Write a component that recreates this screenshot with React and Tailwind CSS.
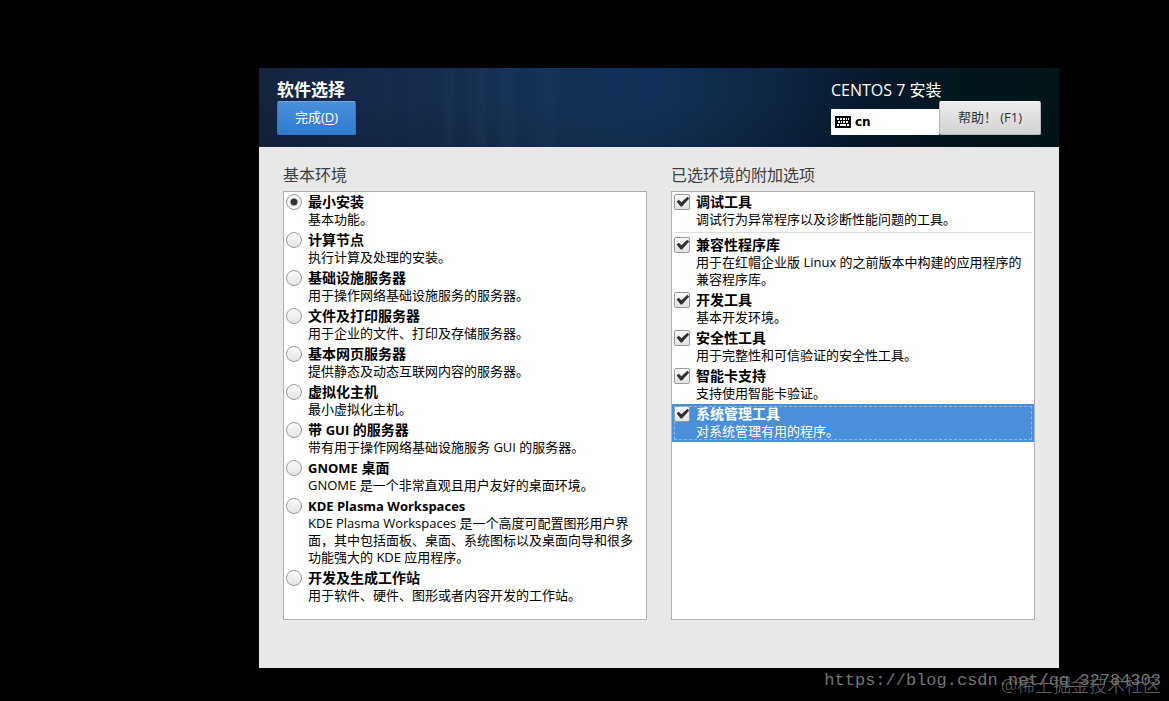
import React, { useState } from "react";

const environments = [
  { name: "最小安装", description: "基本功能。" },
  { name: "计算节点", description: "执行计算及处理的安装。" },
  { name: "基础设施服务器", description: "用于操作网络基础设施服务的服务器。" },
  { name: "文件及打印服务器", description: "用于企业的文件、打印及存储服务器。" },
  { name: "基本网页服务器", description: "提供静态及动态互联网内容的服务器。" },
  { name: "虚拟化主机", description: "最小虚拟化主机。" },
  { name: "带 GUI 的服务器", description: "带有用于操作网络基础设施服务 GUI 的服务器。" },
  { name: "GNOME 桌面", description: "GNOME 是一个非常直观且用户友好的桌面环境。" },
  {
    name: "KDE Plasma Workspaces",
    description:
      "KDE Plasma Workspaces 是一个高度可配置图形用户界面，其中包括面板、桌面、系统图标以及桌面向导和很多功能强大的 KDE 应用程序。",
  },
  { name: "开发及生成工作站", description: "用于软件、硬件、图形或者内容开发的工作站。" },
];

const addons = [
  { name: "调试工具", description: "调试行为异常程序以及诊断性能问题的工具。", separated: true },
  {
    name: "兼容性程序库",
    description: "用于在红帽企业版 Linux 的之前版本中构建的应用程序的兼容程序库。",
  },
  { name: "开发工具", description: "基本开发环境。" },
  { name: "安全性工具", description: "用于完整性和可信验证的安全性工具。" },
  { name: "智能卡支持", description: "支持使用智能卡验证。" },
  { name: "系统管理工具", description: "对系统管理有用的程序。" },
];

function KeyboardIcon() {
  return (
    <svg width="16" height="12" viewBox="0 0 16 12" aria-hidden="true" shapeRendering="crispEdges">
      <rect width="16" height="12" rx="1" fill="#000" />
      <g fill="#fff">
        <path d="M2 2h2v2H2zM5 2h2v2H5zM8 2h2v2H8zM11 2h1v2h-1zM13 2h1v2h-1z" />
        <path d="M3 5h2v2H3zM6 5h1v2H6zM8 5h2v2H8zM11 5h2v2h-2z" />
        <path d="M2 8h2v2H2zM5 8h6v2H5zM12 8h2v2h-2z" />
      </g>
    </svg>
  );
}

// Latin words are set one size smaller than the Chinese characters around them.
function Title({ text }) {
  return text.split(/([A-Za-z][A-Za-z ]*[A-Za-z])/).map((part, i) =>
    i % 2 === 1 ? (
      <span key={i} className="text-[13px] leading-none">
        {part}
      </span>
    ) : (
      part
    ),
  );
}

function ItemText({ name, description }) {
  return (
    <span className="min-w-0 flex-1">
      <span className="block pb-[2px] text-[14px] leading-[15px] font-bold">
        <Title text={name} />
      </span>
      <span className="block text-[13px] leading-[17px]">{description}</span>
    </span>
  );
}

function EnvironmentRow({ item, checked, onChange }) {
  return (
    <li>
      <label className="flex gap-[6px] py-[2px] pr-3 pl-[2px]">
        <input
          type="radio"
          name="environment"
          checked={checked}
          onChange={onChange}
          className="size-4 shrink-0 appearance-none rounded-full border border-[#9a9a9a] bg-[linear-gradient(#fafafa,#e4e4e4)] checked:bg-[radial-gradient(circle,#2e3436_0_3px,#f4f4f4_4px)]"
        />
        <ItemText name={item.name} description={item.description} />
      </label>
    </li>
  );
}

function AddonRow({ item, checked, onChange, selected }) {
  return (
    <li className={selected ? "bg-[#4a90d9] text-white" : ""}>
      <label
        className={
          selected
            ? "flex gap-[6px] py-[2px] pr-[10px] pl-[2px] outline-1 -outline-offset-3 outline-dashed outline-[#8ab9ea]"
            : "flex gap-[6px] py-[2px] pr-[10px] pl-[2px]"
        }
      >
        <span className="grid size-4 shrink-0">
          <input
            type="checkbox"
            checked={checked}
            onChange={onChange}
            className="peer col-start-1 row-start-1 size-4 appearance-none rounded-[2px] border border-[#9a9a9a] bg-[linear-gradient(#fcfcfc,#e2e2e2)]"
          />
          <svg
            viewBox="0 0 16 16"
            aria-hidden="true"
            className="pointer-events-none invisible z-10 col-start-1 row-start-1 size-4 peer-checked:visible"
          >
            <path d="M2.6 7.4 L4.8 5.8 L7.4 8.2 L13.4 2.8 L15.2 4.6 L8 12.4 L6.6 12.4 Z" fill="#2e3436" />
          </svg>
        </span>
        <ItemText name={item.name} description={item.description} />
      </label>
      {item.separated && <hr className="m-[2px] border-t border-[#dcdcdc]" />}
    </li>
  );
}

export default function App() {
  const [environment, setEnvironment] = useState(0);
  const [checked, setChecked] = useState(addons.map(() => true));

  return (
    <div
      lang="zh-CN"
      className="relative flex min-h-screen flex-col bg-black pt-[68px] pr-[110px] pb-[33px] pl-[259px] font-['Open_Sans','Noto_Sans_CJK_SC',sans-serif] text-black"
    >
      <div className="flex flex-1 flex-col bg-[#e8e8e8]">
        <header className="flex items-start justify-between bg-[linear-gradient(90deg,#00000000_16%,#0000000d_18%,#00000000_19%,#00000010_22%,#ffffff04_24%,#0000000d_25%,#ffffff05_28%,#0000000a_29%,#ffffff05_31%,#0000000a_33%,#ffffff03_36%,#00000008_38%,#00000000_44%),linear-gradient(180deg,#00000000_40%,#0000001f),linear-gradient(90deg,#14233f,#15284a_12%,#163158_36%,#132f57_50%,#0e2544_64%,#07192b_76%,#04161d_88%,#031518)] px-[18px] pt-[11px] pb-3 text-white">
          <div>
            <h1 className="text-[17px] leading-[22px] font-bold">软件选择</h1>
            <button
              type="button"
              className="flex h-[34px] w-[79px] items-center justify-center rounded-[2px] border border-[#2f76c4] border-t-[#6aa6e2] bg-[linear-gradient(#4a90d9,#2f7bd0)] text-[13px]"
            >
              完成(<span className="underline underline-offset-2">D</span>)
            </button>
          </div>
          <div>
            <p className="text-[16px] leading-[22px]">CENTOS 7 安装</p>
            <div className="flex items-end">
              <button
                type="button"
                aria-label="cn"
                className="flex h-[26px] w-[108px] items-center gap-1 bg-white px-1 font-['DejaVu_Sans',sans-serif] text-[12px] font-bold text-black"
              >
                <KeyboardIcon />
                cn
              </button>
              <button
                type="button"
                className="flex h-[34px] w-[102px] items-center justify-center rounded-[2px] border border-[#b4b4b4] border-t-[#f4f4f4] bg-[linear-gradient(#ececec,#d2d2d2)] text-[13px] text-[#2e3436]"
              >
                帮助！ (F1)
              </button>
            </div>
          </div>
        </header>

        <main className="grid flex-1 grid-cols-2 gap-6 px-6 pt-4 pb-12">
          <section className="flex flex-col">
            <h2 className="mb-1 text-[16px] leading-6 text-[#3c4042]">基本环境</h2>
            <ul className="flex-1 border border-[#b0b0b0] bg-white">
              {environments.map((item, i) => (
                <EnvironmentRow
                  key={item.name}
                  item={item}
                  checked={environment === i}
                  onChange={() => setEnvironment(i)}
                />
              ))}
            </ul>
          </section>
          <section className="flex flex-col">
            <h2 className="mb-1 text-[16px] leading-6 text-[#3c4042]">已选环境的附加选项</h2>
            <ul className="flex-1 border border-[#b0b0b0] bg-white">
              {addons.map((item, i) => (
                <AddonRow
                  key={item.name}
                  item={item}
                  selected={i === addons.length - 1}
                  checked={checked[i]}
                  onChange={() => setChecked(checked.map((c, j) => (j === i ? !c : c)))}
                />
              ))}
            </ul>
          </section>
        </main>
      </div>

      <p className="absolute right-2 bottom-2 font-['Liberation_Mono',monospace] text-[17px] leading-6 text-[#737373]">
        https://blog.csdn.net/qq_32784303
      </p>
      <p className="absolute right-2 bottom-1 text-[18px] leading-6 font-light text-[#6b6b6b]">@稀土掘金技术社区</p>
    </div>
  );
}
